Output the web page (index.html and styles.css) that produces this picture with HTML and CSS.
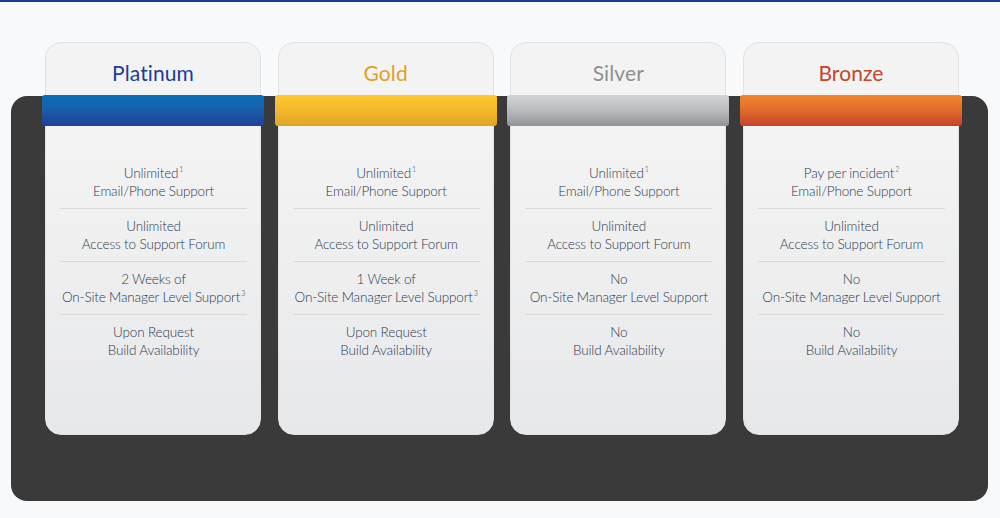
FILE: index.html
```html
<!DOCTYPE html>
<html lang="en">
<head>
<meta charset="utf-8">
<title>Support Plans</title>
<link rel="stylesheet" href="styles.css">
</head>
<body>
<div class="page">
  <div class="panel">
    <div class="cards">
      <div class="card">
        <div class="card-head"><h2 class="title title-platinum">Platinum</h2></div>
        <div class="ribbon ribbon-platinum"></div>
        <ul class="features">
          <li>Unlimited<sup>1</sup><br>Email/Phone Support</li>
          <li>Unlimited<br>Access to Support Forum</li>
          <li>2 Weeks of<br>On-Site Manager Level Support<sup>3</sup></li>
          <li>Upon Request<br>Build Availability</li>
        </ul>
      </div>
      <div class="card">
        <div class="card-head"><h2 class="title title-gold">Gold</h2></div>
        <div class="ribbon ribbon-gold"></div>
        <ul class="features">
          <li>Unlimited<sup>1</sup><br>Email/Phone Support</li>
          <li>Unlimited<br>Access to Support Forum</li>
          <li>1 Week of<br>On-Site Manager Level Support<sup>3</sup></li>
          <li>Upon Request<br>Build Availability</li>
        </ul>
      </div>
      <div class="card">
        <div class="card-head"><h2 class="title title-silver">Silver</h2></div>
        <div class="ribbon ribbon-silver"></div>
        <ul class="features">
          <li>Unlimited<sup>1</sup><br>Email/Phone Support</li>
          <li>Unlimited<br>Access to Support Forum</li>
          <li>No<br>On-Site Manager Level Support</li>
          <li>No<br>Build Availability</li>
        </ul>
      </div>
      <div class="card">
        <div class="card-head"><h2 class="title title-bronze">Bronze</h2></div>
        <div class="ribbon ribbon-bronze"></div>
        <ul class="features">
          <li>Pay per incident<sup>2</sup><br>Email/Phone Support</li>
          <li>Unlimited<br>Access to Support Forum</li>
          <li>No<br>On-Site Manager Level Support</li>
          <li>No<br>Build Availability</li>
        </ul>
      </div>
    </div>
  </div>
</div>
</body>
</html>
```

FILE: styles.css
```css
* { box-sizing: border-box; }

html, body {
  margin: 0;
  padding: 0;
}

body {
  background: #f8f9fb;
  border-top: 2px solid #1b3a94;
  font-family: Lato, "Open Sans", "Liberation Sans", sans-serif;
  height: 518px;
  overflow: hidden;
}

.page {
  padding: 94px 12px 0 11px;
}

.panel {
  background: #3a3a3a;
  border-radius: 16px;
  height: 405px;
  padding: 0 29px 0 34px;
}

.cards {
  display: flex;
  justify-content: space-between;
  position: relative;
  top: -54px;
}

.card {
  width: 216px;
  height: 393px;
  border: 1px solid #e1e2e4;
  border-radius: 16px;
  background: linear-gradient(to bottom, #f3f3f3 0%, #f3f3f3 25%, #e7e8ea 100%);
  display: flex;
  flex-direction: column;
}

.card-head {
  height: 52px;
  padding-top: 17px;
  text-align: center;
}

.title {
  margin: 0;
  font-weight: 400;
  font-size: 21px;
  line-height: 26px;
  letter-spacing: 0.1px;
}

.title-platinum { color: #1c3c98; }
.title-gold { color: #dba228; }
.title-silver { color: #8f8f90; }
.title-bronze { color: #c5442a; }

.ribbon {
  height: 31px;
  margin: 0 -4px;
  border-radius: 3px;
}

.ribbon-platinum { background: linear-gradient(to bottom, #0a6fba 0%, #1760aa 45%, #213f96 100%); }
.ribbon-gold { background: linear-gradient(to bottom, #fdc930 0%, #f4b92c 45%, #e0a426 100%); }
.ribbon-silver { background: linear-gradient(to bottom, #d3d4d6 0%, #b9babd 50%, #939498 100%); }
.ribbon-bronze { background: linear-gradient(to bottom, #f1872d 0%, #e26a2b 50%, #c4432a 100%); }

.features {
  list-style: none;
  margin: 0;
  padding: 30px 13px 0 14px;
}

.features li {
  padding: 8px 0;
  border-bottom: 1px solid #d9dadc;
  text-align: center;
  font-size: 13.5px;
  font-weight: 300;
  line-height: 18px;
  color: #2c3a52;
  letter-spacing: -0.15px;
  white-space: nowrap;
}

.features li:last-child {
  border-bottom: none;
}

.features sup {
  font-size: 7px;
  line-height: 0;
  vertical-align: 6px;
  margin-left: 1px;
}
```
